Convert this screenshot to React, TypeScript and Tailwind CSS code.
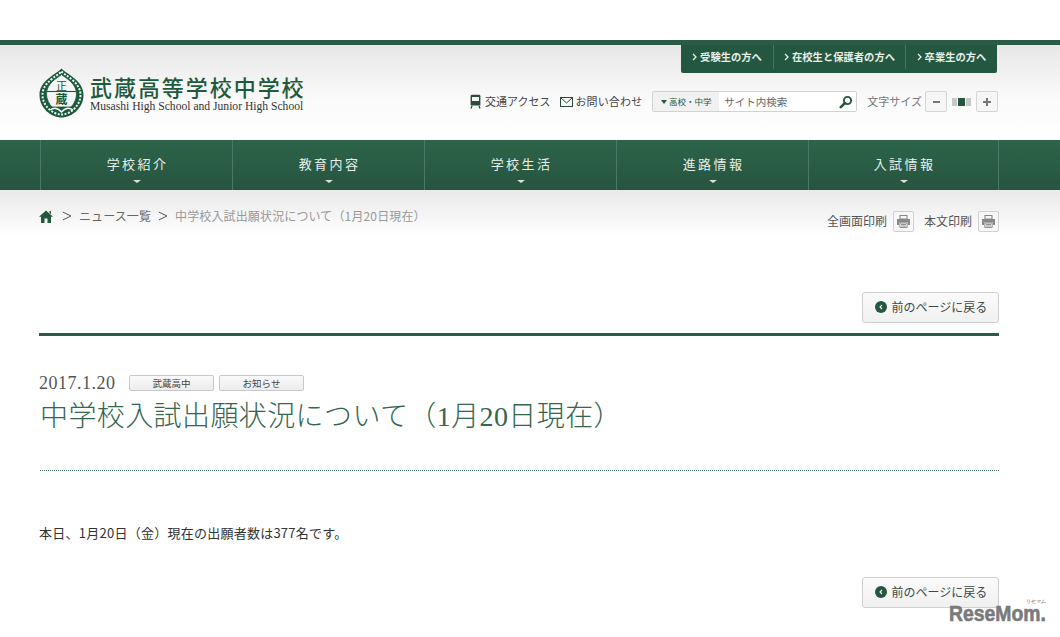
const jp = "font-['Noto_Sans_CJK_JP','Noto_Sans',sans-serif]";

function BackButton() {
  return (
    <a className="flex h-[31px] w-[137px] items-center justify-center gap-[5px] rounded-[3px] border border-[#cfcfcf] bg-gradient-to-b from-[#fbfbfb] to-[#f0f0f0] pb-px pl-px text-[12px] text-[#3c4a44]">
      <span className="flex h-[12px] w-[12px] items-center justify-center rounded-full bg-[#24573f]">
        <svg width="6" height="6" viewBox="0 0 6 6"><path d="M4 1 L2 3 L4 5" fill="none" stroke="#fff" strokeWidth="1.1" /></svg>
      </span>
      前のページに戻る
    </a>
  );
}

function Emblem() {
  return (
    <svg width="45" height="50" viewBox="0 0 45 50" className="shrink-0">
      <path d="M22.5 0.5 C27 6 44.5 12 44.5 27 C44.5 40 33 49.5 22.5 49.5 C12 49.5 0.5 40 0.5 27 C0.5 12 18 6 22.5 0.5 Z" fill="#1a5a3c" />
      <path d="M22.5 3.5 C26.5 8 41.5 14 41.5 27 C41.5 38 31 46.5 22.5 46.5 C14 46.5 3.5 38 3.5 27 C3.5 14 18.5 8 22.5 3.5 Z" fill="none" stroke="#f3f6f4" strokeWidth="2" strokeDasharray="2 1.5" />
      <path d="M22.5 6.5 C26.5 10 37.5 15 37.5 26 C37.5 31 35 36 32 39 L13 39 C10 36 7.5 31 7.5 26 C7.5 15 18.5 10 22.5 6.5 Z" fill="#f3f6f4" stroke="#1a5a3c" strokeWidth="0.8" />
      <path d="M8 23.5 H37" stroke="#1a5a3c" strokeWidth="1.1" />
      <text x="22.5" y="21.5" textAnchor="middle" fontSize="11" fill="#1a5a3c" fontFamily="'Noto Sans CJK JP',sans-serif">正</text>
      <text x="22.5" y="35.5" textAnchor="middle" fontSize="12" fontWeight="700" fill="#1a5a3c" fontFamily="'Noto Sans CJK JP',sans-serif">蔵</text>
      <path d="M11 42 C15 39 19 40 22.5 44 C26 40 30 39 34 42" fill="none" stroke="#f3f6f4" strokeWidth="1.4" />
    </svg>
  );
}

function Printer() {
  return (
    <span className="flex h-[21px] w-[21px] items-center justify-center rounded-[2px] border border-[#d0d0d0] bg-[#f7f7f7]">
      <svg width="15" height="15" viewBox="0 0 15 15">
        <path d="M4 1.5 H11 V5 H4 Z" fill="none" stroke="#888" strokeWidth="1.1" />
        <path d="M1 5 H14 V11 H12 V8.5 H3 V11 H1 Z" fill="#888" />
        <path d="M3.8 9 H11.2 V13.5 H3.8 Z M5 10.5 H10 M5 12 H10" fill="none" stroke="#888" strokeWidth="0.9" />
      </svg>
    </span>
  );
}

function Caret() {
  return <span className="mt-[7px] h-0 w-0 border-x-[4px] border-t-[3px] border-x-transparent border-t-[#d8e4dd]" />;
}

function Tag({ children }: { children: string }) {
  return (
    <span className="flex h-[16px] w-[85px] items-center justify-center rounded-[2px] border border-[#c9c9c9] bg-gradient-to-b from-[#fafafa] to-[#ececec] text-[9.5px] text-[#444]">
      {children}
    </span>
  );
}

function Sep() {
  return (
    <svg width="10" height="10" viewBox="0 0 10 10" className="shrink-0 text-[#555]">
      <path d="M0.8 1 L9 5 L0.8 9" fill="none" stroke="currentColor" strokeWidth="1" />
    </svg>
  );
}

const navItems = ["学校紹介", "教育内容", "学校生活", "進路情報", "入試情報"];

export default function App() {
  return (
    <div className={`relative h-[637px] w-[1060px] overflow-hidden bg-white ${jp}`}>
      <div className="h-[40px]" />
      <div className="h-[5px] bg-[#2b5b47]" />

      <header className="h-[95px] bg-gradient-to-b from-[#e7e7e7] via-[#fbfbfb] via-[60%] to-white pl-[39px]">
        <div className="relative h-full w-[960px]">
          <div className="flex justify-end pr-[2px]">
            <div className="flex h-[28px] rounded-b-[2px] bg-[#24573f] pb-[4px] text-[10.3px] font-bold text-[#e6eee9]">
              <span className="flex w-[92px] items-center justify-center gap-[3px]"><Chevron />受験生の方へ</span>
              <span className="flex w-[132px] items-center justify-center gap-[3px] border-l border-[#46745f]"><Chevron />在校生と保護者の方へ</span>
              <span className="flex w-[92px] items-center justify-center gap-[3px] border-l border-[#46745f]"><Chevron />卒業生の方へ</span>
            </div>
          </div>

          <div className="absolute left-0 top-[23px] flex items-center gap-[6px]">
            <Emblem />
            <div className="flex flex-col">
              <span className="whitespace-nowrap text-[22px] font-medium leading-[26px] tracking-[1.95px] text-[#1f5a3d]">武蔵高等学校中学校</span>
              <span className="mt-[1px] whitespace-nowrap font-['Liberation_Serif',serif] text-[11.6px] leading-[13px] text-[#333]">Musashi High School and Junior High School</span>
            </div>
          </div>

          <div className="absolute right-[1px] top-[46px] flex items-center text-[11px] text-[#444]">
            <svg width="11" height="15" viewBox="0 0 11 15" className="mr-[4px]">
              <path d="M2 0.8 H9 Q10.4 0.8 10.4 2.2 V11.5 H0.6 V2.2 Q0.6 0.8 2 0.8 Z" fill="#2b4b3c" />
              <path d="M2 3 H9 V7 H2 Z" fill="#f5f5f5" />
              <path d="M2 12 L1 14.5 M9 12 L10 14.5" stroke="#2b4b3c" strokeWidth="1.3" />
            </svg>
            <span>交通アクセス</span>
            <svg width="13" height="10" viewBox="0 0 13 10" className="ml-[10px] mr-[2px]">
              <rect x="0.5" y="0.5" width="12" height="9" fill="none" stroke="#2b4b3c" />
              <path d="M1 1 L6.5 6 L12 1" fill="none" stroke="#2b4b3c" />
            </svg>
            <span className="tracking-[0.15px]">お問い合わせ</span>
            <div className="ml-[10px] flex h-[21px] w-[205px] items-center rounded-[2px] border border-[#d2d2d2] bg-white">
              <span className="flex h-full w-[66px] items-center justify-center gap-[2px] rounded-l-[2px] bg-[#f1f1f1] text-[8.5px] text-[#24573f]">
                <span className="h-0 w-0 border-x-[3px] border-t-[4px] border-x-transparent border-t-[#24573f]" />高校・中学
              </span>
              <span className="ml-[5px] flex-1 text-[10.5px] text-[#666]">サイト内検索</span>
              <svg width="14" height="14" viewBox="0 0 14 14" className="mr-[3px]">
                <circle cx="8.5" cy="5.5" r="3.6" fill="none" stroke="#24573f" strokeWidth="1.9" />
                <path d="M5.8 8.2 L1.8 12.2" stroke="#24573f" strokeWidth="2.6" strokeLinecap="round" />
              </svg>
            </div>
            <span className="ml-[10px] text-[#777]">文字サイズ</span>
            <span className="ml-[3px] flex h-[21px] w-[22px] items-center justify-center rounded-[2px] border border-[#d5d5d5] bg-[#f6f6f6]"><span className="h-[2px] w-[7px] bg-[#777]" /></span>
            <span className="mx-[5px] flex h-[8px] gap-px">
              <span className="w-[5px] bg-[#c8c8c8]" /><span className="w-[7px] bg-[#24573f]" /><span className="w-[5px] bg-[#c8c8c8]" />
            </span>
            <span className="relative flex h-[21px] w-[22px] items-center justify-center rounded-[2px] border border-[#d5d5d5] bg-[#f6f6f6]">
              <span className="h-[2px] w-[8px] bg-[#777]" />
              <span className="absolute h-[8px] w-[2px] bg-[#777]" />
            </span>
          </div>
        </div>
      </header>

      <nav className="h-[50px] bg-gradient-to-b from-[#2c6449] to-[#27543f] pl-[40px]">
        <ul className="flex h-full w-[959px] border-r border-[#4b7a64]">
          {navItems.map((n) => (
            <li key={n} className="flex h-full w-[192px] shrink-0 flex-col items-center justify-center border-l border-[#4b7a64] pt-[8px] last:w-[190px]">
              <span className="pl-[2px] text-[13px] leading-[18px] tracking-[2.4px] text-[#e8efeb]">{n}</span>
              <Caret />
            </li>
          ))}
        </ul>
      </nav>

      <div className="h-[52px] bg-gradient-to-b from-[#e9e9e9] to-white to-[87%] pl-[39px]">
        <div className="flex h-full w-[960px] justify-between">
          <div className="flex h-full items-center text-[12px]">
            <svg width="14" height="13" viewBox="0 0 14 13"><path d="M7 0.5 L14 6.8 H12 V13 H8.5 V8.5 H5.5 V13 H2 V6.8 H0 Z" fill="#24573f" /><path d="M10.5 1 H12 V4 L10.5 3 Z" fill="#24573f" /></svg>
            <span className="ml-[9px] mr-[7px] flex"><Sep /></span>
            <span className="tracking-[0.1px] text-[#666]">ニュース一覧</span>
            <span className="ml-[7px] mr-[7px] flex"><Sep /></span>
            <span className="tracking-[0.14px] text-[#999]">中学校入試出願状況について（1月20日現在）</span>
          </div>
          <div className="flex items-start pt-[21px] text-[12px] text-[#555]">
            <span className="mr-[6px] leading-[20px]">全画面印刷</span>
            <Printer />
            <span className="ml-[10px] mr-[6px] leading-[20px]">本文印刷</span>
            <Printer />
          </div>
        </div>
      </div>

      <main className="w-[999px] pl-[39px]">
        <div className="flex justify-end pt-[50px]"><BackButton /></div>
        <div className="mt-[10px] h-[3px] bg-[#2b5b47]" />

        <div className="mt-[39px] flex h-[16px] items-center">
          <span className="w-[82px] whitespace-nowrap font-['Liberation_Serif',serif] text-[18px] tracking-[0.5px] text-[#555]">2017.1.20</span>
          <span className="ml-[8px] flex gap-[5px]"><Tag>武蔵高中</Tag><Tag>お知らせ</Tag></span>
        </div>
        <h1 className="mt-[8px] h-[35px] whitespace-nowrap pl-px font-['Liberation_Serif','Noto_Sans_CJK_JP',sans-serif] text-[28px] font-light leading-[35px] tracking-[0.4px] text-[#35664f]">
          中学校入試出願状況について（1月20日現在）
        </h1>
        <div className="ml-px mt-[36px] border-t border-dotted border-[#3f6b57]" />
        <p className="mt-[53px] text-[13px] leading-[18px] tracking-[0.25px] text-[#333]">本日、1月20日（金）現在の出願者数は377名です。</p>
        <div className="mt-[35px] flex justify-end"><BackButton /></div>
      </main>

      <div className="absolute left-[949px] top-[602px] w-[98px] font-['Liberation_Sans',sans-serif] text-[#7a7a7a]">
        <span className="absolute right-[1px] top-[-3px] whitespace-nowrap text-[5px] leading-[5px] text-[#555]">リセマム</span>
        <span className="block origin-left scale-x-[0.88] whitespace-nowrap text-[22px] font-bold leading-[24px] [-webkit-text-stroke:0.6px_#7a7a7a]">ReseMom.</span>
      </div>
    </div>
  );
}

function Chevron() {
  return <svg width="5" height="8" viewBox="0 0 5 8"><path d="M1 1 L4 4 L1 7" fill="none" stroke="#e6eee9" strokeWidth="1.3" /></svg>;
}
